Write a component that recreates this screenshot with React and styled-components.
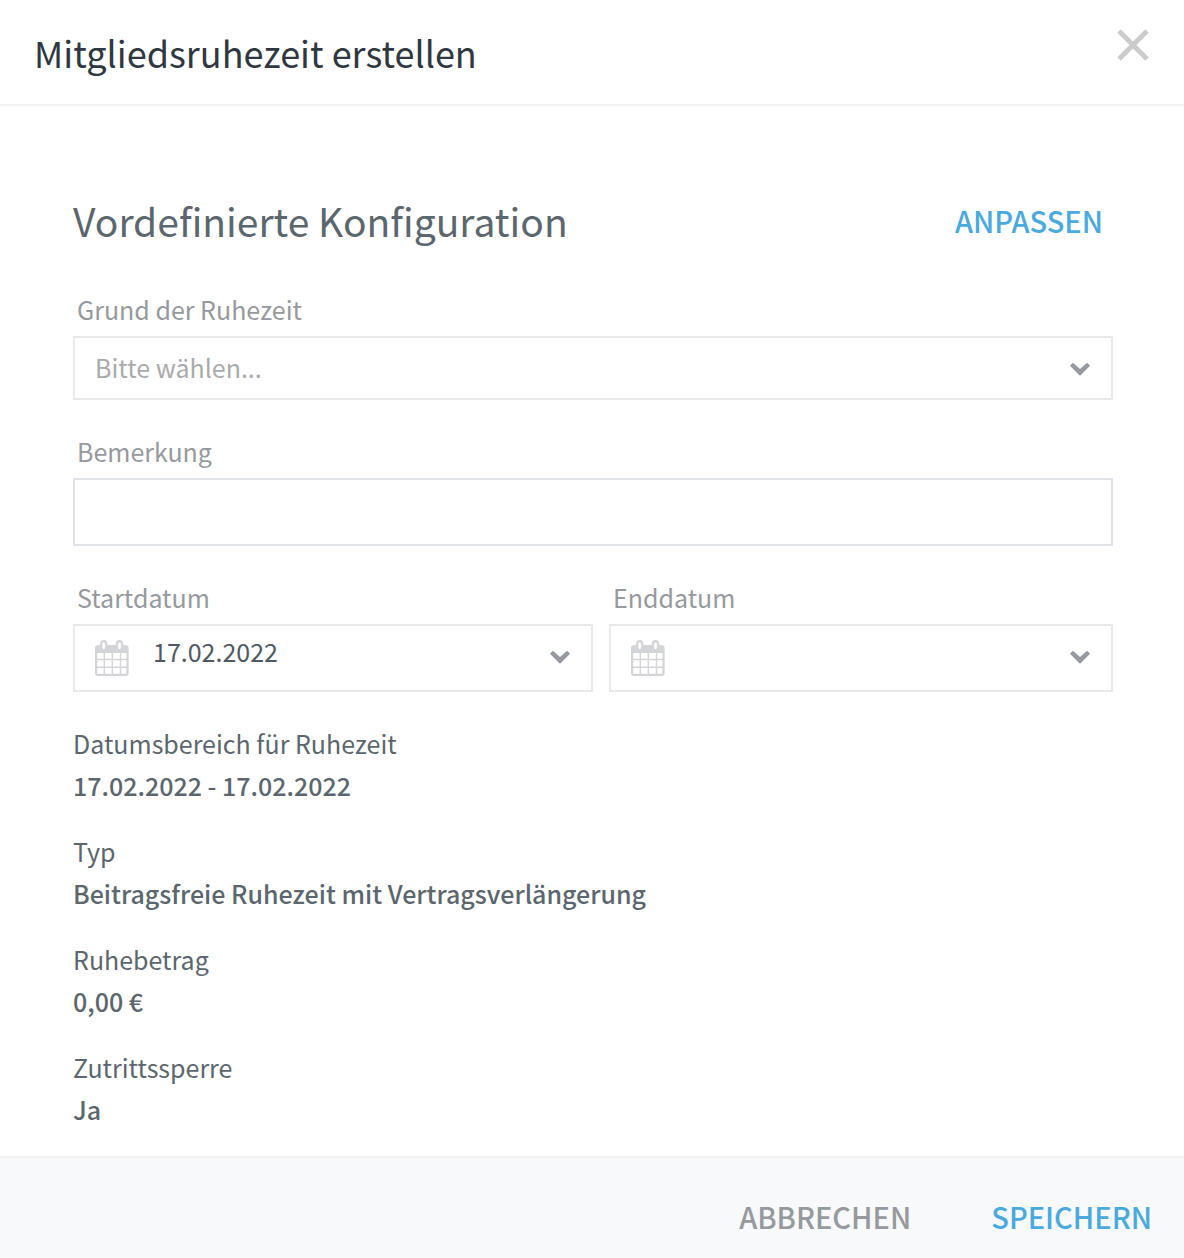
import React from 'react';
import styled, {createGlobalStyle} from 'styled-components';

const GlobalStyle = createGlobalStyle`
  *, *::before, *::after {
    box-sizing: border-box;
  }

  body {
    margin: 0;
    background: #ffffff;
    color: #5b666d;
    font-family: "Noto Sans CJK SC", "Noto Sans", sans-serif;
    font-size: 25px;
  }

  #root {
    display: flex;
    flex-direction: column;
    min-height: 100vh;
  }
`;

const Dialog = styled.form`
  flex: 1;
  display: flex;
  flex-direction: column;
`;

const Header = styled.header`
  display: flex;
  justify-content: space-between;
  align-items: flex-start;
  padding: 28px 34px;
  border-bottom: 2px solid #f2f2f3;
`;

const Title = styled.h1`
  margin: 0;
  color: #2f3840;
  font-size: 36px;
  font-weight: 400;
  line-height: 48px;
`;

const CloseButton = styled.button`
  display: flex;
  padding: 0;
  border: none;
  background: none;
  color: #cccccc;
  cursor: pointer;
`;

const Body = styled.main`
  flex: 1;
  padding: 84px 71px 2px 73px;
`;

const SectionHead = styled.div`
  display: flex;
  justify-content: space-between;
  align-items: center;
  padding-right: 10px;
  margin-bottom: 44px;
`;

const SectionTitle = styled.h2`
  margin: 0;
  font-size: 39px;
  font-weight: 400;
  line-height: 60px;
`;

const TextButton = styled.button`
  padding: 0;
  border: none;
  background: none;
  color: ${props => props.$muted ? '#96999d' : '#4aa9dd'};
  font-family: inherit;
  font-size: 29px;
  font-weight: 500;
  line-height: 40px;
  text-transform: uppercase;
  cursor: pointer;
`;

const Field = styled.div`
  margin-bottom: 36px;
`;

const Label = styled.label`
  display: block;
  padding-left: 4px;
  margin-bottom: 12px;
  color: #96999d;
  line-height: 30px;
`;

const Control = styled.div`
  display: flex;
  align-items: center;
  height: ${props => props.$low ? '64px' : '68px'};
  border: 2px solid ${props => props.$strong ? '#dfe3e6' : '#e8e9ea'};
`;

const Select = styled.select`
  flex: 1;
  height: 100%;
  padding: 0 20px 2px;
  border: none;
  outline: none;
  appearance: none;
  background: transparent;
  color: #a9aaab;
  font: inherit;
`;

const Input = styled.input`
  flex: 1;
  min-width: 0;
  height: 100%;
  padding: 0 20px;
  border: none;
  outline: none;
  background: transparent;
  color: #4f5961;
  font: inherit;
`;

const DateInput = styled(Input)`
  padding: 0 0 14px 24px;
`;

const DateRow = styled.div`
  display: grid;
  grid-template-columns: 520fr 504fr;
  column-gap: 16px;
  margin-bottom: -6px;
`;

const Details = styled.dl`
  margin: 0;
`;

const Detail = styled.div`
  margin-bottom: 24px;
  line-height: 42px;
`;

const Term = styled.dt`
  margin: 0;
`;

const Value = styled.dd`
  margin: 0;
  font-weight: 500;
`;

const Footer = styled.footer`
  display: flex;
  justify-content: flex-end;
  gap: 80px;
  padding: 38px 32px 22px;
  border-top: 2px solid #f0f2f4;
  background: #f7f9fb;
`;

const Chevron = styled.svg`
  flex: none;
  margin: ${props => props.$low ? '4px' : '0'} 21px 0 0;
  pointer-events: none;
`;

const Calendar = styled.svg`
  flex: none;
  margin-left: 20px;
`;

function ChevronIcon({low}) {
    return (
        <Chevron $low={low} width="20" height="14" viewBox="0 0 20 14" aria-hidden="true">
            <path
                d="M1 2.8 L3 0.8 L10 7.2 L17 0.8 L19 2.8 L10 11.6 Z"
                fill="#96999d"
                stroke="#96999d"
                strokeWidth="1.6"
                strokeLinejoin="round"
            />
        </Chevron>
    );
}

function CalendarIcon() {
    return (
        <Calendar width="34" height="36" viewBox="0 0 34 36" fill="none" aria-hidden="true">
            <rect x="0" y="5" width="33.6" height="31" rx="3" fill="#d4d5d8"/>
            <path
                d="M2.2 13H8.6V18.8H2.2Z M10 13H16.6V18.8H10Z M18 13H24.8V18.8H18Z M26.2 13H31.4V18.8H26.2Z M2.2 20.3H8.6V26.6H2.2Z M10 20.3H16.6V26.6H10Z M18 20.3H24.8V26.6H18Z M26.2 20.3H31.4V26.6H26.2Z M2.2 28H8.6V33.8H2.2Z M10 28H16.6V33.8H10Z M18 28H24.8V33.8H18Z M26.2 28H31.4V33.8H26.2Z"
                fill="#ffffff"
            />
            <rect x="6.2" y="1.2" width="5" height="9" rx="2.5" fill="#ffffff" stroke="#d4d5d8" strokeWidth="2.4"/>
            <rect x="22" y="1.2" width="5" height="9" rx="2.5" fill="#ffffff" stroke="#d4d5d8" strokeWidth="2.4"/>
        </Calendar>
    );
}

function DateField({id, label, value}) {
    return (
        <Field>
            <Label htmlFor={id}>{label}</Label>
            <Control>
                <CalendarIcon/>
                <DateInput id={id} defaultValue={value}/>
                <ChevronIcon/>
            </Control>
        </Field>
    );
}

const details = [
    {term: 'Datumsbereich für Ruhezeit', value: '17.02.2022 - 17.02.2022'},
    {term: 'Typ', value: 'Beitragsfreie Ruhezeit mit Vertragsverlängerung'},
    {term: 'Ruhebetrag', value: '0,00 €'},
    {term: 'Zutrittssperre', value: 'Ja'},
];

function App() {
    return (
        <>
            <GlobalStyle/>
            <Dialog onSubmit={e => e.preventDefault()}>
                <Header>
                    <Title>Mitgliedsruhezeit erstellen</Title>
                    <CloseButton type="button" aria-label="Schließen">
                        <svg width="34" height="34" viewBox="0 0 34 34" fill="none">
                            <path d="M3 3 L31 31 M31 3 L3 31" stroke="currentColor" strokeWidth="5"/>
                        </svg>
                    </CloseButton>
                </Header>
                <Body>
                    <SectionHead>
                        <SectionTitle>Vordefinierte Konfiguration</SectionTitle>
                        <TextButton type="button">Anpassen</TextButton>
                    </SectionHead>
                    <Field>
                        <Label htmlFor="reason">Grund der Ruhezeit</Label>
                        <Control $low>
                            <Select id="reason">
                                <option>Bitte wählen...</option>
                            </Select>
                            <ChevronIcon low/>
                        </Control>
                    </Field>
                    <Field>
                        <Label htmlFor="note">Bemerkung</Label>
                        <Control $strong>
                            <Input id="note"/>
                        </Control>
                    </Field>
                    <DateRow>
                        <DateField id="start" label="Startdatum" value="17.02.2022"/>
                        <DateField id="end" label="Enddatum" value=""/>
                    </DateRow>
                    <Details>
                        {details.map(item => (
                            <Detail key={item.term}>
                                <Term>{item.term}</Term>
                                <Value>{item.value}</Value>
                            </Detail>
                        ))}
                    </Details>
                </Body>
                <Footer>
                    <TextButton type="button" $muted>Abbrechen</TextButton>
                    <TextButton type="submit">Speichern</TextButton>
                </Footer>
            </Dialog>
        </>
    );
}

export default App;
